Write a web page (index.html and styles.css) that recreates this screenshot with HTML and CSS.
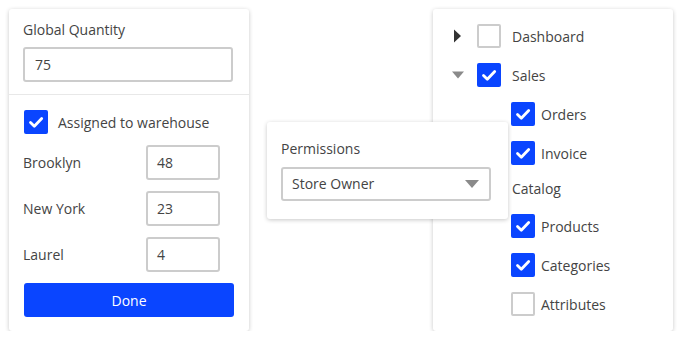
FILE: index.html
```html
<!DOCTYPE html>
<html>
<head>
<meta charset="utf-8">
<link rel="stylesheet" href="styles.css">
</head>
<body>
<div class="stage">
  <div class="card qty">
    <div class="qty-top">
      <div class="label">Global Quantity</div>
      <div class="input wide">75</div>
    </div>
    <div class="qty-bottom">
      <div class="check-row">
        <span class="cb on"><svg viewBox="0 0 24 24"><path d="M6.5 12.5l3.8 3.8 7.4-7.8" /></svg></span>
        <span class="check-label">Assigned to warehouse</span>
      </div>
      <div class="wh-row"><span>Brooklyn</span><div class="input small">48</div></div>
      <div class="wh-row"><span>New York</span><div class="input small">23</div></div>
      <div class="wh-row"><span>Laurel</span><div class="input small">4</div></div>
      <div class="btn">Done</div>
    </div>
  </div>

  <div class="card perm">
    <div class="label">Permissions</div>
    <div class="select"><span>Store Owner</span><svg class="sel-caret" viewBox="0 0 16 8"><path d="M1 0h14l-7 8z"/></svg></div>
  </div>

  <div class="card tree">
    <div class="t-row">
      <span class="caret"><svg viewBox="0 0 14 14"><path d="M3 0.5l7 6.5-7 6.5z" fill="#333"/></svg></span>
      <span class="cb off"></span>
      <span class="t-label">Dashboard</span>
    </div>
    <div class="t-row">
      <span class="caret"><svg viewBox="0 0 14 14"><path d="M1 3.5h12l-6 7z" fill="#8a8a8a"/></svg></span>
      <span class="cb on"><svg viewBox="0 0 24 24"><path d="M6.5 12.5l3.8 3.8 7.4-7.8" /></svg></span>
      <span class="t-label">Sales</span>
    </div>
    <div class="t-row child">
      <span class="cb on"><svg viewBox="0 0 24 24"><path d="M6.5 12.5l3.8 3.8 7.4-7.8" /></svg></span>
      <span class="c-label">Orders</span>
    </div>
    <div class="t-row child">
      <span class="cb on"><svg viewBox="0 0 24 24"><path d="M6.5 12.5l3.8 3.8 7.4-7.8" /></svg></span>
      <span class="c-label">Invoice</span>
    </div>
    <div class="t-group">Catalog</div>
    <div class="t-row child">
      <span class="cb on"><svg viewBox="0 0 24 24"><path d="M6.5 12.5l3.8 3.8 7.4-7.8" /></svg></span>
      <span class="c-label">Products</span>
    </div>
    <div class="t-row child">
      <span class="cb on"><svg viewBox="0 0 24 24"><path d="M6.5 12.5l3.8 3.8 7.4-7.8" /></svg></span>
      <span class="c-label">Categories</span>
    </div>
    <div class="t-row child">
      <span class="cb off"></span>
      <span class="c-label">Attributes</span>
    </div>
  </div>
</div>
</body>
</html>
```
FILE: styles.css
```css
* { box-sizing: border-box; }
html, body { margin: 0; padding: 0; background: #fff; }
body {
  font-family: "Open Sans", "Liberation Sans", sans-serif;
  font-size: 14px;
  color: #444;
}
.stage {
  display: flex;
  align-items: center;
  padding: 9px 0 0 9px;
  height: 331px;
}
.card {
  background: #fff;
  border-radius: 3px;
  box-shadow: 0 1px 4px rgba(0,0,0,0.22);
  flex: none;
}
.qty { width: 240px; height: 322px; }
.qty-top {
  padding: 12px 15px 12px 14px;
  border-bottom: 1px solid #e8e8e8;
}
.label { line-height: 18px; margin-bottom: 8px; }
.input {
  border: 2px solid #cccccc;
  border-radius: 3px;
  height: 35px;
  line-height: 31px;
  padding-left: 10px;
  color: #444;
}
.input.wide { width: 210px; }
.input.small { width: 74px; padding-left: 9px; }
.qty-bottom {
  padding: 15px 15px 14px 14px;
  display: flex;
  flex-direction: column;
  gap: 11px;
}
.check-row { display: flex; align-items: center; height: 24px; padding-left: 1px; }
.check-label { margin-left: 10px; }
.wh-row {
  display: flex;
  align-items: center;
  justify-content: space-between;
  padding-right: 14px;
}
.btn {
  margin-left: 1px;
  height: 34px;
  background: #0a45ff;
  color: #fff;
  border-radius: 3px;
  display: flex;
  align-items: center;
  justify-content: center;
}
.cb {
  width: 24px; height: 24px;
  border-radius: 2px;
  flex: none;
  display: inline-flex;
}
.cb.on { background: #0a45ff; }
.cb.off { border: 2px solid #cccccc; }
.cb svg { width: 24px; height: 24px; fill: none; stroke: #fff; stroke-width: 2.8; stroke-linecap: round; stroke-linejoin: round; }

.perm {
  width: 241px;
  margin-left: 18px;
  margin-right: -75px;
  z-index: 2;
  padding: 18px 17px 18px 14px;
}
.perm .label { margin-bottom: 9px; }
.select {
  height: 34px;
  border: 2px solid #cccccc;
  border-radius: 3px;
  display: flex;
  align-items: center;
  justify-content: space-between;
  padding: 0 9px 0 9px;
}
.sel-caret { width: 16px; height: 8px; fill: #8a8a8a; }

.tree {
  width: 240px;
  height: 322px;
  padding: 15px 0 15px 18px;
  display: flex;
  flex-direction: column;
  gap: 15px;
}
.t-row { display: flex; align-items: center; height: 24px; }
.caret { width: 14px; height: 14px; margin-right: 12px; display: inline-flex; }
.caret svg { width: 14px; height: 14px; }
.t-label { margin-left: 11px; }
.t-row.child { padding-left: 60px; }
.c-label { margin-left: 6px; }
.t-group { padding-left: 61px; line-height: 18px; height: 20px; }
```
